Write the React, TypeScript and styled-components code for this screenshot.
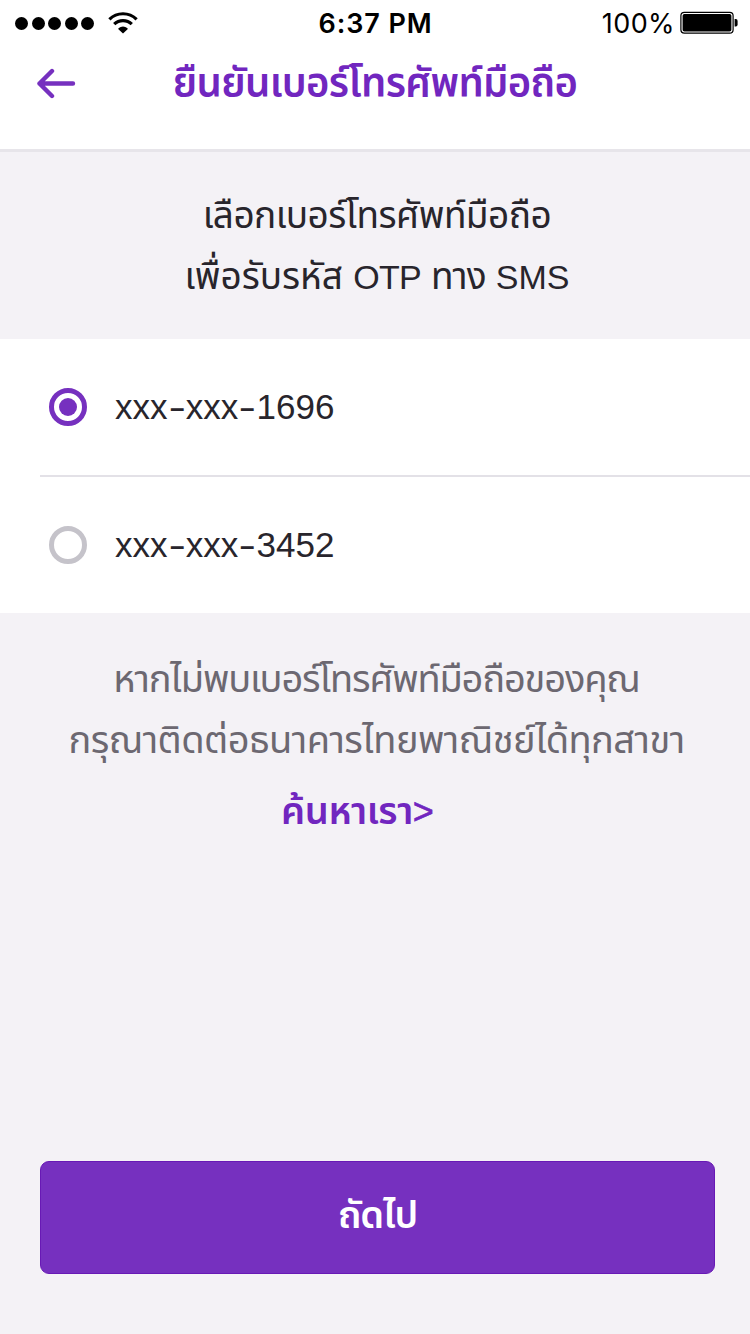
import React, { Fragment, useState } from "react";
import styled, { createGlobalStyle } from "styled-components";

const purple = "#7630bf";
const deepPurple = "#7126bf";

const GlobalStyle = createGlobalStyle`
  * { box-sizing: border-box; }
  body {
    margin: 0;
    background: #f4f2f6;
    font-family: "Liberation Sans", "Noto Sans", "Noto Sans Thai", sans-serif;
    color: #28252c;
  }
`;

const Screen = styled.div`
  width: 750px;
  height: 1334px;
  display: flex;
  flex-direction: column;
  background: #f4f2f6;
  overflow: hidden;
`;

const StatusBar = styled.div`
  flex: none;
  height: 46px;
  display: grid;
  grid-template-columns: 1fr auto 1fr;
  align-items: center;
  padding: 0 12px 0 15px;
  background: #fff;
  color: #000;
  font-family: Inter, sans-serif;
`;

const Signal = styled.div`
  display: flex;
  align-items: center;
  gap: 3.5px;
`;

const Dot = styled.span`
  width: 13px;
  height: 13px;
  border-radius: 50%;
  background: #000;
`;

const WifiIcon = styled.svg`
  margin-left: 10px;
`;

const Clock = styled.div`
  font-size: 27px;
  font-weight: 600;
  letter-spacing: 0.9px;
  margin-right: 2px;
`;

const Power = styled.div`
  display: flex;
  align-items: center;
  justify-content: flex-end;
  gap: 5px;
  font-size: 27px;
  letter-spacing: 0.4px;
`;

const NavBar = styled.header`
  flex: none;
  height: 106px;
  display: grid;
  grid-template-columns: 112px 1fr 112px;
  align-items: start;
  background: #fff;
  border-bottom: 3px solid #e7e5ea;
`;

const BackButton = styled.button`
  height: 76px;
  display: flex;
  align-items: center;
  padding: 0 0 0 36px;
  border: 0;
  background: none;
`;

const Line = styled.span<{ $spacing?: number }>`
  display: block;
  white-space: nowrap;
  letter-spacing: ${(p) => p.$spacing ?? 0}px;
`;

const Title = styled.h1`
  margin: 0;
  display: flex;
  justify-content: center;
  font-size: 40px;
  line-height: 75px;
  font-weight: 600;
  color: ${deepPurple};
`;

const Intro = styled.div`
  flex: none;
  height: 187px;
  padding: 33px 0 0 4px;
  display: flex;
  flex-direction: column;
  align-items: center;
  font-size: 37px;
  line-height: 61px;
`;

const Word = styled.span<{ $size?: number; $spacing?: number }>`
  font-size: ${(p) => p.$size ?? 37}px;
  letter-spacing: ${(p) => p.$spacing ?? 0}px;
`;

const Options = styled.div`
  flex: none;
  background: #fff;
  padding-left: 40px;
`;

const Option = styled.button<{ $divided?: boolean }>`
  width: 100%;
  height: ${(p) => (p.$divided ? 138 : 136)}px;
  display: flex;
  align-items: center;
  gap: 28px;
  padding: 0 0 0 9px;
  border: 0;
  border-bottom: ${(p) => (p.$divided ? "2px solid #e3e1e7" : "0")};
  background: none;
  color: inherit;
  font: inherit;
  font-size: 35px;
`;

const Dash = styled.span`
  display: inline-block;
  width: 18.3px;
  text-align: center;
  transform: scaleX(1.5);
`;

const Radio = styled.span<{ $checked: boolean }>`
  width: 38px;
  height: 38px;
  display: grid;
  place-items: center;
  border: 5px solid ${(p) => (p.$checked ? purple : "#c5c3ca")};
  border-radius: 50%;

  &::after {
    content: "";
    width: 18px;
    height: 18px;
    border-radius: 50%;
    background: ${(p) => (p.$checked ? purple : "transparent")};
  }
`;

const Note = styled.div`
  padding: 36px 0 0 3px;
  display: flex;
  flex-direction: column;
  align-items: center;
  font-size: 38px;
  line-height: 61px;
  color: #6c6871;
`;

const FindUs = styled.a`
  margin: 10px 38px 0 0;
  display: flex;
  color: ${deepPurple};
  font-weight: 600;
`;

const Chevron = styled.span`
  font-size: 36px;
  font-weight: 400;
  -webkit-text-stroke: 0.6px ${deepPurple};
`;

const Footer = styled.footer`
  margin-top: auto;
  padding: 0 35px 60px 40px;
`;

const NextButton = styled.button`
  width: 100%;
  height: 113px;
  display: flex;
  justify-content: center;
  align-items: center;
  padding-bottom: 3px;
  border: 1px solid #6819b5;
  border-radius: 9px;
  background: ${purple};
  color: #fff;
  font: inherit;
  font-size: 38px;
  font-weight: 600;
`;

const numbers = ["xxx-xxx-1696", "xxx-xxx-3452"];

function PhoneNumber({ value }: { value: string }) {
  return (
    <Line>
      {value.split("-").map((part, i) => (
        <Fragment key={i}>
          {i > 0 && <Dash>-</Dash>}
          {part}
        </Fragment>
      ))}
    </Line>
  );
}

export default function App() {
  const [selected, setSelected] = useState(0);
  return (
    <>
      <GlobalStyle />
      <Screen>
        <StatusBar>
          <Signal>
            {[0, 1, 2, 3, 4].map((n) => (
              <Dot key={n} />
            ))}
            <WifiIcon width="30" height="22" viewBox="0 0 30 22">
              <path d="M1.4 7.3a19.4 19.4 0 0 1 27.2 0" fill="none" stroke="#000" strokeWidth="3.2" />
              <path d="M6.2 12.2a12.5 12.5 0 0 1 17.6 0" fill="none" stroke="#000" strokeWidth="3.2" />
              <path d="M10.4 16.3a7.2 7.2 0 0 1 9.2 0q.4 1-.8 1.8L15 21.4l-3.8-3.3q-1.2-.8-.8-1.8z" />
            </WifiIcon>
          </Signal>
          <Clock>6:37 PM</Clock>
          <Power>
            <span>100%</span>
            <svg width="58" height="24" viewBox="0 0 58 24">
              <rect x="0.9" y="1.4" width="52.2" height="20.8" rx="3.4" fill="none" stroke="#000" strokeWidth="1.2" />
              <rect x="2.6" y="3" width="48.8" height="17.6" rx="1.8" />
              <path d="M54.6 8h1.2q1.8 0 1.8 2v3.6q0 2-1.8 2h-1.2z" />
            </svg>
          </Power>
        </StatusBar>
        <NavBar>
          <BackButton aria-label="Back">
            <svg width="40" height="32" viewBox="0 0 40 32">
              <path
                d="M37 15.5H3.5M16 3 3.5 15.5 16 28"
                fill="none"
                stroke={purple}
                strokeWidth="4.4"
                strokeLinecap="round"
                strokeLinejoin="round"
              />
            </svg>
          </BackButton>
          <Title>
            <Line $spacing={-0.65}>ยืนยันเบอร์โทรศัพท์มือถือ</Line>
          </Title>
        </NavBar>
        <Intro>
          <Line $spacing={-0.55}>เลือกเบอร์โทรศัพท์มือถือ</Line>
          <Line>
            เพื่อรับรหัส{" "}
            <Word $size={34} $spacing={-0.8}>OTP</Word>{" "}
            <Word $spacing={-1}>ทาง</Word>{" "}
            <Word $size={34}>SMS</Word>
          </Line>
        </Intro>
        <Options role="radiogroup">
          {numbers.map((number, i) => (
            <Option
              key={number}
              role="radio"
              aria-checked={selected === i}
              $divided={i === 0}
              onClick={() => setSelected(i)}
            >
              <Radio $checked={selected === i} />
              <PhoneNumber value={number} />
            </Option>
          ))}
        </Options>
        <Note>
          <Line $spacing={-1.15}>หากไม่พบเบอร์โทรศัพท์มือถือของคุณ</Line>
          <Line $spacing={-0.55}>กรุณาติดต่อธนาคารไทยพาณิชย์ได้ทุกสาขา</Line>
          <FindUs>
            <Line $spacing={-0.45}>ค้นหาเรา</Line>
            <Chevron>&gt;</Chevron>
          </FindUs>
        </Note>
        <Footer>
          <NextButton>
            <Line $spacing={-1}>ถัดไป</Line>
          </NextButton>
        </Footer>
      </Screen>
    </>
  );
}
